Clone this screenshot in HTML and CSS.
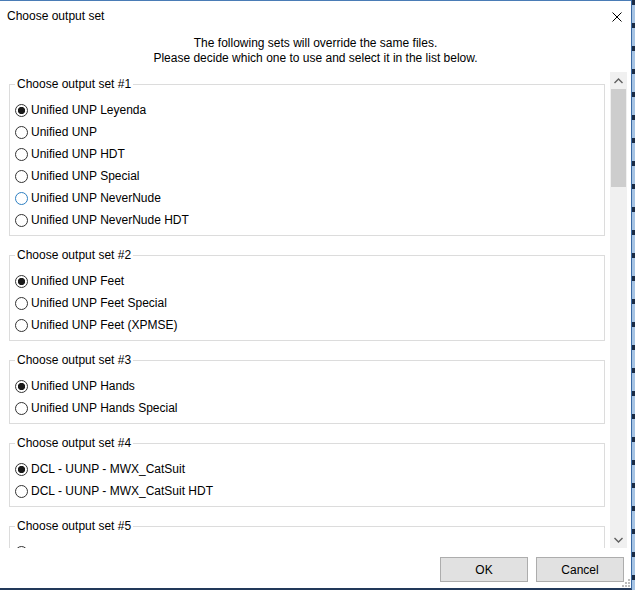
FILE: index.html
```html
<!DOCTYPE html>
<html lang="en">
<head>
    <meta charset="UTF-8">
    <meta name="viewport" content="width=device-width, initial-scale=1.0">
    <title>Choose output set</title>
    <link rel="stylesheet" href="styles.css">
</head>
<body>
    <div class="desktop">
        <div class="window">
            <div class="title-bar">
                <span class="title">Choose output set</span>
                <span class="close-button">
                    <svg width="10" height="10" viewBox="0 0 10 10">
                        <path d="M0.5 0.5 L9.5 9.5 M9.5 0.5 L0.5 9.5" stroke="#000" stroke-width="1" fill="none"/>
                    </svg>
                </span>
            </div>
            <div class="intro">
                <p>The following sets will override the same files.</p>
                <p>Please decide which one to use and select it in the list below.</p>
            </div>
            <div class="scroll-pane">
                <div class="scroll-content">
                    <fieldset class="set-group">
                        <legend>Choose output set #1</legend>
                        <label class="option"><input type="radio" name="set1" checked><span>Unified UNP Leyenda</span></label>
                        <label class="option"><input type="radio" name="set1"><span>Unified UNP</span></label>
                        <label class="option"><input type="radio" name="set1"><span>Unified UNP HDT</span></label>
                        <label class="option"><input type="radio" name="set1"><span>Unified UNP Special</span></label>
                        <label class="option hover"><input type="radio" name="set1"><span>Unified UNP NeverNude</span></label>
                        <label class="option"><input type="radio" name="set1"><span>Unified UNP NeverNude HDT</span></label>
                    </fieldset>
                    <fieldset class="set-group">
                        <legend>Choose output set #2</legend>
                        <label class="option"><input type="radio" name="set2" checked><span>Unified UNP Feet</span></label>
                        <label class="option"><input type="radio" name="set2"><span>Unified UNP Feet Special</span></label>
                        <label class="option"><input type="radio" name="set2"><span>Unified UNP Feet (XPMSE)</span></label>
                    </fieldset>
                    <fieldset class="set-group">
                        <legend>Choose output set #3</legend>
                        <label class="option"><input type="radio" name="set3" checked><span>Unified UNP Hands</span></label>
                        <label class="option"><input type="radio" name="set3"><span>Unified UNP Hands Special</span></label>
                    </fieldset>
                    <fieldset class="set-group">
                        <legend>Choose output set #4</legend>
                        <label class="option"><input type="radio" name="set4" checked><span>DCL - UUNP - MWX_CatSuit</span></label>
                        <label class="option"><input type="radio" name="set4"><span>DCL - UUNP - MWX_CatSuit HDT</span></label>
                    </fieldset>
                    <fieldset class="set-group">
                        <legend>Choose output set #5</legend>
                        <label class="option"><input type="radio" name="set5" checked><span>&nbsp;</span></label>
                        <label class="option"><input type="radio" name="set5"><span>&nbsp;</span></label>
                    </fieldset>
                </div>
                <div class="scrollbar">
                    <div class="scroll-arrow">
                        <svg width="9" height="6" viewBox="0 0 9 6">
                            <path d="M0.5 5 L4.5 1 L8.5 5" stroke="#606060" stroke-width="1.4" fill="none"/>
                        </svg>
                    </div>
                    <div class="scroll-track">
                        <div class="scroll-thumb"></div>
                    </div>
                    <div class="scroll-arrow">
                        <svg width="9" height="6" viewBox="0 0 9 6">
                            <path d="M0.5 1 L4.5 5 L8.5 1" stroke="#606060" stroke-width="1.4" fill="none"/>
                        </svg>
                    </div>
                </div>
            </div>
            <div class="button-row">
                <button>OK</button>
                <button>Cancel</button>
            </div>
            <span class="size-grip">
                <svg width="8" height="8" viewBox="0 0 8 8">
                    <rect x="6" y="0" width="2" height="2" fill="#bdbdbd"/>
                    <rect x="3" y="3" width="2" height="2" fill="#bdbdbd"/>
                    <rect x="6" y="3" width="2" height="2" fill="#bdbdbd"/>
                    <rect x="0" y="6" width="2" height="2" fill="#bdbdbd"/>
                    <rect x="3" y="6" width="2" height="2" fill="#bdbdbd"/>
                    <rect x="6" y="6" width="2" height="2" fill="#bdbdbd"/>
                </svg>
            </span>
        </div>
        <div class="desktop-edge"></div>
    </div>
</body>
</html>
```

FILE: styles.css
```css
* {
    margin: 0;
    padding: 0;
    box-sizing: border-box;
}
body {
    width: 635px;
    height: 590px;
    overflow: hidden;
    font-family: "Liberation Sans", Arial, sans-serif;
    font-size: 12px;
    color: #000;
    background: #1d3454;
}
.desktop {
    width: 635px;
    height: 590px;
    display: flex;
    flex-direction: row;
}
.window {
    position: relative;
    width: 632px;
    height: 590px;
    background: #fff;
    border-top: 1px solid #4a7cb6;
    border-right: 1px solid #3a6aa4;
    border-bottom: 2px solid #22395a;
    display: flex;
    flex-direction: column;
}
.desktop-edge {
    flex: 1;
    background: repeating-linear-gradient(to bottom, #1a2b44 0px, #1a2b44 5px, #a6c3e3 5px, #a6c3e3 23px);
}

.title-bar {
    height: 30px;
    display: flex;
    justify-content: space-between;
    align-items: center;
    padding: 0 8px 0 7px;
}
.title {
    font-size: 12px;
    line-height: 30px;
}
.close-button {
    width: 10px;
    height: 10px;
    margin-right: 1px;
    margin-top: 1px;
    display: flex;
}

.intro {
    padding-top: 5px;
    padding-bottom: 6px;
    text-align: center;
    line-height: 15px;
}

.scroll-pane {
    margin-left: 8px;
    width: 619px;
    height: 476px;
    display: flex;
    flex-direction: row;
}
.scroll-content {
    flex: 1;
    overflow: hidden;
    padding: 4px 5px 0 1px;
}
.set-group {
    border: 1px solid #dcdcdc;
    padding: 7px 0 4px 5px;
    margin-bottom: 11px;
    min-width: 0;
}
.set-group legend {
    padding: 0 2px;
    line-height: 16px;
}
.option {
    height: 22px;
    display: flex;
    align-items: center;
    gap: 3px;
    white-space: nowrap;
}
.option input[type="radio"] {
    appearance: none;
    -webkit-appearance: none;
    width: 13px;
    height: 13px;
    margin: 0;
    border: 1px solid #333;
    border-radius: 50%;
    background: #fff;
}
.option input[type="radio"]:checked {
    background: radial-gradient(circle, #1a1a1a 0px, #1a1a1a 3.3px, #fff 4px);
}
.option.hover input[type="radio"] {
    border-color: #2e7fc2;
}

.scrollbar {
    width: 17px;
    background: #f0f0f0;
    display: flex;
    flex-direction: column;
}
.scroll-arrow {
    height: 17px;
    display: flex;
    justify-content: center;
    align-items: center;
}
.scroll-track {
    flex: 1;
}
.scroll-thumb {
    height: 98px;
    margin: 0 1px;
    background: #cdcdcd;
}

.button-row {
    flex: 1;
    display: flex;
    justify-content: flex-end;
    align-items: flex-start;
    gap: 8px;
    padding: 9px 7px 0 0;
}
.button-row button {
    width: 88px;
    height: 25px;
    border: 1px solid #adadad;
    background: #e1e1e1;
    font-family: "Liberation Sans", Arial, sans-serif;
    font-size: 12px;
    color: #000;
}
.size-grip {
    position: absolute;
    right: 1px;
    bottom: 1px;
    width: 8px;
    height: 8px;
    display: flex;
}
```
